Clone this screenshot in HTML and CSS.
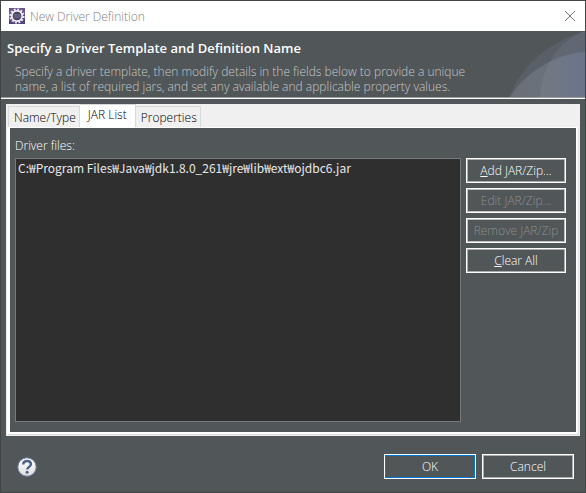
FILE: index.html
```html
<!DOCTYPE html>
<html lang="en">
<head>
<meta charset="utf-8">
<title>New Driver Definition</title>
<link rel="stylesheet" href="styles.css">
</head>
<body>
<main class="dialog">
  <header class="titlebar">
    <svg class="app-icon" viewBox="0 0 16 16" aria-hidden="true">
      <rect width="16" height="16" fill="#51407f"/>
      <path d="M0 0h16v5L0 13z" fill="#6b568f"/>
      <circle cx="8" cy="8" r="6.6" fill="none" stroke="#e6e3e8" stroke-width="2" stroke-dasharray="2 1.450"/>
      <circle cx="8" cy="8" r="5.200" fill="#35284f" stroke="#f3f1f3" stroke-width="1.700"/>
      <circle cx="8" cy="8" r="3.900" fill="#4a4668"/>
      <path d="M4.400 7h7.200M4.400 9h7.200" stroke="#77799a" stroke-width="1"/>
    </svg>
    <span class="window-title">New Driver Definition</span>
    <button class="close" aria-label="Close">
      <svg viewBox="0 0 10 10" aria-hidden="true"><path d="M0 0L10 10M10 0L0 10" stroke="#777" fill="none"/></svg>
    </button>
  </header>
  <section class="banner">
    <svg class="banner-art" viewBox="0 0 75 66" aria-hidden="true">
      <defs>
        <linearGradient id="sky" gradientUnits="userSpaceOnUse" x1="0" x2="75"><stop offset="0" stop-color="#a0a0a4"/><stop offset=".5" stop-color="#a0a4b4"/><stop offset="1" stop-color="#8898cc"/></linearGradient>
      </defs>
      <path d="M0 66C7 40 35 12 75 0V66z" fill="#7888a8" opacity=".18"/>
      <path d="M0 66C14 43 43 23 75 21V66z" fill="url(#sky)" opacity=".26"/>
      <path d="M30 66C32 34 49 10 75 0V66z" fill="url(#sky)" opacity=".14"/>
    </svg>
    <h1>Specify a Driver Template and Definition Name</h1>
    <p>Specify a driver template, then modify details in the fields below to provide a unique<br>name, a list of required jars, and set any available and applicable property values.</p>
  </section>
  <section class="tab-folder">
    <div class="tabs" role="tablist">
      <button class="tab" role="tab">Name/Type</button>
      <button class="tab selected" role="tab" aria-selected="true">JAR List</button>
      <button class="tab" role="tab">Properties</button>
    </div>
    <div class="frame">
      <div class="page" role="tabpanel">
        <label for="files">Driver files:</label>
        <div class="editor">
          <select id="files" size="10">
            <option>C:₩Program Files₩Java₩jdk1.8.0_261₩jre₩lib₩ext₩ojdbc6.jar</option>
          </select>
          <div class="actions">
            <button class="button"><u>A</u>dd JAR/Zip...</button>
            <button class="button" disabled>Edit JAR/Zip...</button>
            <button class="button" disabled>Remove JAR/Zip</button>
            <button class="button"><u>C</u>lear All</button>
          </div>
        </div>
      </div>
    </div>
  </section>
  <footer class="footer">
    <button class="help" aria-label="Help">
      <svg viewBox="0 0 20 20" aria-hidden="true">
        <defs><linearGradient id="orb" x2="0" y2="1"><stop offset="0" stop-color="#fff"/><stop offset="1" stop-color="#dedede"/></linearGradient></defs>
        <circle cx="10" cy="10" r="9.200" fill="url(#orb)" stroke="#6c7fa8"/>
        <path d="M6.200 7.400C6.200 5 7.800 4 10 4s3.900 1.200 3.900 3.200c0 2.600-3.500 2.700-3.700 5.300" fill="none" stroke="#4c628f" stroke-width="2.400"/>
        <circle cx="10.100" cy="15.300" r="1.500" fill="#4c628f"/>
      </svg>
    </button>
    <button class="button wide default">OK</button>
    <button class="button wide">Cancel</button>
  </footer>
</main>
</body>
</html>
```
FILE: styles.css
```css
* { box-sizing: border-box; }

body {
  margin: 0;
  font: 300 12px/15px "Open Sans", "Noto Sans CJK KR", sans-serif;
  color: #fff;
  background: #515658;
}

button, select { font: inherit; color: inherit; }

.dialog {
  display: flex;
  flex-direction: column;
  min-height: 100vh;
  border: 1px solid #414345;
}

.titlebar {
  display: flex;
  align-items: center;
  gap: 5px;
  height: 30px;
  padding: 0 10px 0 8px;
  background: #fff;
  color: #808080;
}

.app-icon { width: 16px; height: 16px; }
.window-title { flex: 1; }

.close {
  width: 10px;
  height: 10px;
  padding: 0;
  border: 0;
  background: none;
}

.close svg { display: block; overflow: visible; }

.banner {
  position: relative;
  height: 68px;
  padding: 10px 6px 0;
  border-bottom: 1px solid #fff;
  box-shadow: inset 0 -1px #999c9d;
}

.banner-art {
  position: absolute;
  top: 0;
  right: 0;
  width: 75px;
  height: 66px;
}

h1 { margin: 0 0 8px; font-size: 13px; font-weight: 600; line-height: 15px; }

.banner p {
  position: relative;
  margin: 0 8px;
  color: #c8c8c8;
  white-space: nowrap;
}

.tab-folder {
  display: flex;
  flex: 1;
  flex-direction: column;
  margin: 5px 5px 0;
  background: #f0f0f0;
}

.tabs {
  display: flex;
  align-items: flex-end;
  height: 23px;
  padding: 0 2px;
}

.tab {
  height: 21px;
  padding: 0 3px 0 5px;
  border: 1px solid #d9d9d9;
  border-bottom: 0;
  background: #f0f0f0;
  color: #000;
}

.tab + .tab { border-left: 0; }

.tab.selected {
  height: 23px;
  padding: 0 8px 3px;
  background: #fff;
}

.frame {
  display: flex;
  flex: 1;
  margin: 0 1px 1px;
  border: 1px solid #dcdcdc;
  border-top-color: #fff;
  border-left-color: #fff;
  background: #fff;
  padding: 0 2px 2px;
}

.page {
  display: flex;
  flex: 1;
  flex-direction: column;
  gap: 5px;
  padding: 10px 10px 10px 5px;
  background: #515658;
}

.editor { display: flex; flex: 1; gap: 5px; }

select {
  flex: 1;
  min-width: 0;
  padding: 0;
  border: 1px solid #777a7c;
  border-radius: 0;
  outline: 0;
  background: #2f2f2f;
  color: #e8e8e8;
  font-family: "Noto Sans CJK KR", sans-serif;
}

option { min-height: 0; padding: 0 2px; line-height: 15px; }

.actions {
  display: flex;
  flex-direction: column;
  gap: 5px;
  width: 100px;
}

.button {
  height: 25px;
  padding: 0;
  border: 1px solid #fff;
  box-shadow: inset 0 0 0 1px #acacac;
  background: #515658;
  white-space: nowrap;
}

.button:disabled { color: #8c8f90; box-shadow: inset 0 0 0 1px #c0c0c0; }
.button.default { box-shadow: inset 0 0 0 1px #0078d7; }
.wide { width: 92px; }

.footer {
  display: flex;
  align-items: center;
  gap: 6px;
  padding: 18px 11px 13px 16px;
}

.help {
  width: 20px;
  height: 20px;
  margin-right: auto;
  padding: 0;
  border: 0;
  background: none;
}

.help svg { display: block; }
```
